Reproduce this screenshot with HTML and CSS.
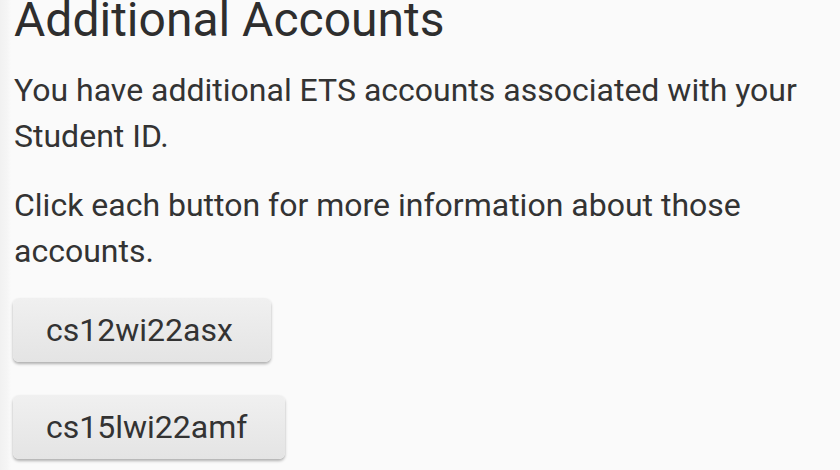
FILE: index.html
```html
<!DOCTYPE html>
<html>
<head>
<meta charset="utf-8">
<link rel="stylesheet" href="styles.css">
</head>
<body>
<main class="page">
  <h1 class="title">Additional Accounts</h1>
  <p class="text first">You have additional ETS accounts associated with your Student ID.</p>
  <p class="text">Click each button for more information about those accounts.</p>
  <div class="buttons">
    <button class="btn">cs12wi22asx</button>
    <button class="btn">cs15lwi22amf</button>
  </div>
</main>
</body>
</html>
```
FILE: styles.css
```css
html, body {
  margin: 0;
  padding: 0;
  background: #fafafa;
}
body {
  font-family: Roboto, "Noto Sans", sans-serif;
  color: #333;
  background: linear-gradient(to right, #f1f1f1 0, #f5f5f5 7px, #fafafa 11px, #fafafa 100%);
  min-height: 470px;
}
.page {
  padding: 0 0 0 14px;
  width: 800px;
}
.title {
  margin: -8px 0 0 0;
  font-size: 48px;
  font-weight: 400;
  line-height: 56px;
  color: #2e2e2e;
}
.text {
  margin: 23px 0 0 0;
  font-size: 32px;
  line-height: 46px;
}
.text.first {
  margin-top: 19px;
}
.buttons {
  display: flex;
  flex-direction: column;
  align-items: flex-start;
  gap: 33px;
  margin-top: 24px;
  margin-left: -1px;
}
.btn {
  font-family: Roboto, "Noto Sans", sans-serif;
  font-size: 32px;
  color: #333;
  height: 64px;
  padding: 0 38px 0 33px;
  border: none;
  border-radius: 6px;
  background: linear-gradient(#f0f0f0, #e4e4e4);
  box-shadow: 0 2px 3px rgba(0,0,0,0.3);
}
```
